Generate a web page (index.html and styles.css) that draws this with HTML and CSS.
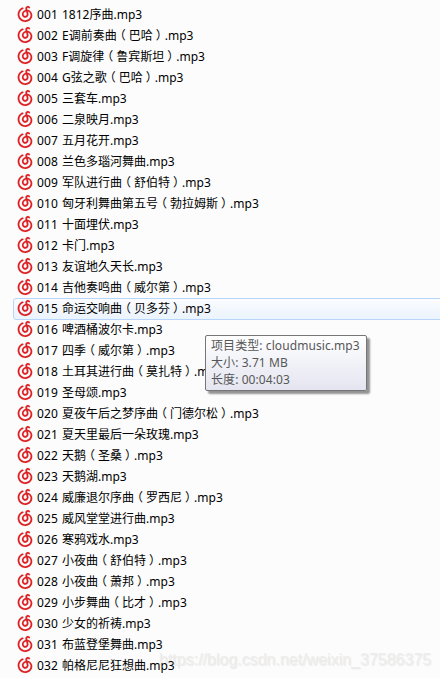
FILE: index.html
```
<!DOCTYPE html>
<html lang="zh-CN">
<head>
<meta charset="utf-8">
<title>音乐</title>
<link rel="stylesheet" href="styles.css">
</head>
<body>
<svg class="defs" aria-hidden="true"><symbol id="music" viewBox="0 0 24 24"><path d="M10.421 11.375c-.294 1.028.012 2.064.784 2.653 1.061.81 2.565.3 2.874-.995.08-.337.103-.722.027-1.056-.23-1.001-.52-1.988-.792-2.996-1.33.154-2.543 1.172-2.893 2.394zm5.548-.287c.273 1.012.285 2.017-.127 3-1.128 2.69-4.721 3.14-6.573.826-1.302-1.627-1.28-3.961.06-5.734.78-1.032 1.804-1.707 3.048-2.054l.379-.104c-.084-.415-.188-.816-.243-1.224-.176-1.317.512-2.503 1.744-3.04 1.226-.535 2.708-.216 3.53.76.406.479.395 1.08-.025 1.464-.412.377-.996.346-1.435-.09-.247-.246-.51-.44-.877-.436-.525.006-.987.418-.945.937.037.468.173.93.3 1.386.022.078.216.135.338.153 1.334.197 2.504.731 3.472 1.676 2.558 2.493 2.861 6.531.672 9.44-1.529 2.032-3.61 3.168-6.127 3.409-4.621.44-8.664-2.53-9.7-7.058C2.515 10.255 4.84 5.831 8.795 4.25c.586-.234 1.143-.031 1.371.498.232.537-.019 1.086-.61 1.35-2.368 1.06-3.817 2.855-4.215 5.424-.533 3.433 1.656 6.776 5 7.72 2.723.77 5.658-.166 7.308-2.33 1.586-2.08 1.4-5.099-.427-6.873a3.979 3.979 0 0 0-1.823-1.013c.198.716.389 1.388.57 2.062z"/></symbol></svg>
<div class="watermark">https://blog.csdn.net/weixin_37586375</div>
<ul class="files" id="files"></ul>
<div class="tooltip"><div>项目类型: cloudmusic.mp3</div><div>大小: 3.71 MB</div><div>长度: 00:04:03</div></div>
<script src="files.js"></script>
</body>
</html>
```
FILE: styles.css
```
* { box-sizing: border-box; }
body {
  margin: 0;
  position: relative;
  width: 440px;
  height: 678px;
  overflow: hidden;
  background: #fcfcfc;
  color: #000;
  font: 12px/19px "Noto Sans", "Noto Sans CJK SC", sans-serif;
}
.defs { position: absolute; width: 0; height: 0; }
.files { position: relative; list-style: none; margin: 0; padding: 4px 0 0 13px; }
.file {
  display: flex;
  align-items: center;
  width: 440px;
  height: 21px;
  padding-left: 1px;
  border: 1px solid transparent;
  border-radius: 3px;
  white-space: nowrap;
}
.file.hover {
  height: 22px;
  margin-bottom: -1px;
  padding-bottom: 1px;
  border-color: #b8d6fb;
  background: linear-gradient(#fbfcfe, #ebf3fd);
}
.icon { width: 20px; height: 20px; flex: none; margin-top: -2px; fill: #dc2024; stroke: #dc2024; stroke-width: .15; }
.number { width: 25px; margin-left: 2px; letter-spacing: .13px; }
.paren { padding: 0 3px; font-feature-settings: "halt"; }
.tooltip {
  position: absolute;
  left: 205px;
  top: 335px;
  width: 162px;
  height: 56px;
  padding: 1px 5px;
  border: 1px solid #767676;
  border-radius: 2px;
  background: linear-gradient(#fff, #e4e5f0);
  box-shadow: 3px 3px 2px rgba(0, 0, 0, .42);
  color: #575757;
  line-height: 17px;
  letter-spacing: .08px;
  white-space: nowrap;
}
.watermark {
  position: absolute;
  left: 159px;
  top: 650px;
  color: #ededed;
  font: 16px/20px "Liberation Sans", sans-serif;
  text-shadow: 1px 1px 1px rgba(160, 160, 160, .2);
  white-space: nowrap;
}
```
FILE: files.js
```
const names = [
  "1812序曲", "E调前奏曲（巴哈）", "F调旋律（鲁宾斯坦）", "G弦之歌（巴哈）", "三套车",
  "二泉映月", "五月花开", "兰色多瑙河舞曲", "军队进行曲（舒伯特）", "匈牙利舞曲第五号（勃拉姆斯）",
  "十面埋伏", "卡门", "友谊地久天长", "吉他奏鸣曲（威尔第）", "命运交响曲（贝多芬）",
  "啤酒桶波尔卡", "四季（威尔第）", "土耳其进行曲（莫扎特）", "圣母颂", "夏夜午后之梦序曲（门德尔松）",
  "夏天里最后一朵玫瑰", "天鹅（圣桑）", "天鹅湖", "威廉退尔序曲（罗西尼）", "威风堂堂进行曲",
  "寒鸦戏水", "小夜曲（舒伯特）", "小夜曲（萧邦）", "小步舞曲（比才）", "少女的祈祷",
  "布蓝登堡舞曲", "帕格尼尼狂想曲"
];
const hovered = 15;
document.getElementById("files").innerHTML = names.map((name, i) => {
  const n = i + 1;
  const label = name.replace(/[（）]/g, '<span class="paren">$&</span>');
  return `<li class="file${n === hovered ? " hover" : ""}"><svg class="icon"><use href="#music"/></svg><span class="number">${String(n).padStart(3, "0")}</span><span class="name">${label}.mp3</span></li>`;
}).join("");
```
